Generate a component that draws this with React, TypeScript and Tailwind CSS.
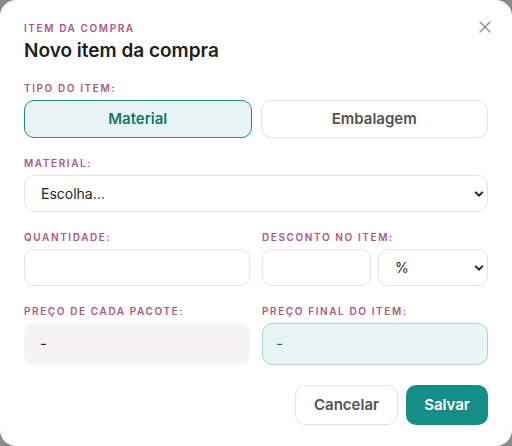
import React from "react";
import { X } from "lucide-react";

const Label = ({ children }: { children: React.ReactNode }) => (
  <div className="text-[10px] leading-4 font-semibold tracking-[0.16em] uppercase text-[#b0567f] mb-1">
    {children}
  </div>
);

const Chevron = () => (
  <svg
    className="pointer-events-none absolute right-[4px] top-1/2 -translate-y-1/2"
    width="10"
    height="7"
    viewBox="0 0 10 7"
    fill="none"
  >
    <path d="M1.2 1.4 5 5.2 8.8 1.4" stroke="#222" strokeWidth="2" />
  </svg>
);

const SelectBox = ({ value, className }: { value: string; className?: string }) => (
  <div className={`relative ${className ?? ""}`}>
    <select
      defaultValue={value}
      className="appearance-none w-full h-[37px] rounded-[10px] border border-[#e6e3e0] bg-white pl-4 pr-6 text-[14px] text-[#1f1f1f] outline-none"
    >
      <option>{value}</option>
    </select>
    <Chevron />
  </div>
);

export default function App() {
  return (
    <div className="w-[512px] h-[446px] bg-[#8a8a8a] font-['Inter',sans-serif]">
      <div className="relative h-full bg-white rounded-[16px] px-6 pt-5">
        <button className="absolute right-[17px] top-[17px] text-[#8a8a8a]">
          <X size={20} strokeWidth={1.5} />
        </button>

        <div className="text-[10px] leading-4 font-semibold tracking-[0.16em] uppercase text-[#b0567f]">
          Item da compra
        </div>
        <h2 className="mt-px text-[19px] leading-7 font-semibold text-[#1e1e1e]">Novo item da compra</h2>

        <div className="mt-[15px]">
          <Label>Tipo do item:</Label>
          <div className="grid grid-cols-2 gap-[9px]">
            <button className="h-[38px] rounded-[10px] border border-[#1a9088] bg-[#e8f5f4] text-[15px] font-semibold text-[#14766f]">
              Material
            </button>
            <button className="h-[38px] rounded-[10px] border border-[#e6e3e0] bg-white text-[15px] font-semibold text-[#555250]">
              Embalagem
            </button>
          </div>
        </div>

        <div className="mt-[17px]">
          <Label>Material:</Label>
          <SelectBox value="Escolha…" />
        </div>

        <div className="mt-[17px] grid grid-cols-2 gap-3">
          <div>
            <Label>Quantidade:</Label>
            <input className="w-full h-[37px] rounded-[10px] border border-[#e6e3e0] bg-white px-4 text-[14px] outline-none" />
          </div>
          <div>
            <Label>Desconto no item:</Label>
            <div className="flex gap-[7px]">
              <input className="w-[109px] h-[37px] rounded-[10px] border border-[#e6e3e0] bg-white px-4 text-[14px] outline-none" />
              <SelectBox value="%" className="flex-1" />
            </div>
          </div>
        </div>

        <div className="mt-[17px] grid grid-cols-2 gap-3">
          <div>
            <Label>Preço de cada pacote:</Label>
            <div className="mt-px h-[42px] rounded-[10px] bg-[#f5f4f2] px-4 flex items-center text-[15px] text-[#1f1f1f]">
              -
            </div>
          </div>
          <div>
            <Label>Preço final do item:</Label>
            <div className="mt-px h-[42px] rounded-[10px] bg-[#e8f5f4] border border-[#a3d8d2] px-[13px] flex items-center text-[15px] text-[#14766f]">
              -
            </div>
          </div>
        </div>

        <div className="mt-5 flex justify-end gap-2">
          <button className="h-[40px] w-[103px] rounded-[10px] border border-[#e6e3e0] bg-white text-[15px] font-semibold text-[#555250]">
            Cancelar
          </button>
          <button className="h-[40px] w-[82px] rounded-[10px] bg-[#138f87] text-[15px] font-semibold text-white">
            Salvar
          </button>
        </div>
      </div>
    </div>
  );
}
